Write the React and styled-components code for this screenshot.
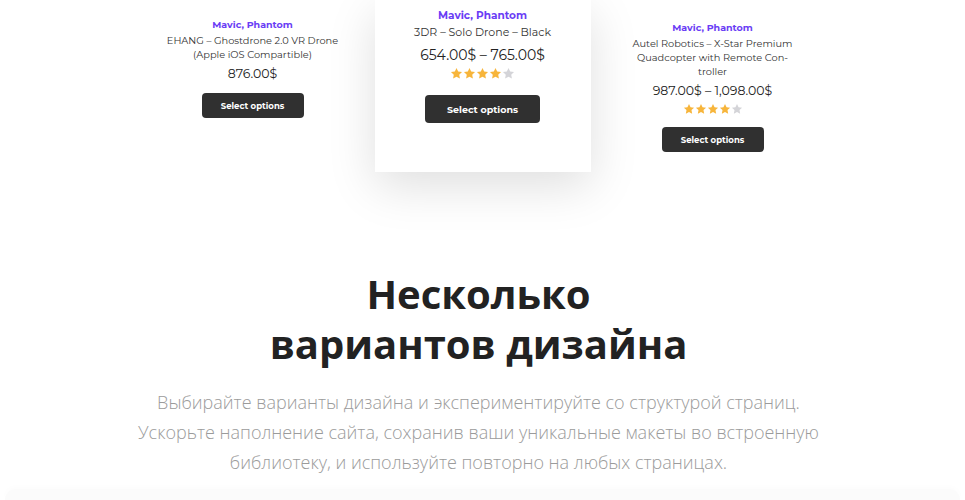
import React from 'react';
import styled, { createGlobalStyle } from 'styled-components';

const GlobalStyle = createGlobalStyle`
  html, body {
    margin: 0;
    padding: 0;
    background: #fff;
  }
  body {
    width: 965px;
    height: 500px;
    overflow: hidden;
  }
`;

const products = [
  {
    title: 'EHANG – Ghostdrone 2.0 VR Drone (Apple iOS Compartible)',
    price: '876.00$',
    rating: 0,
    size: 'sm',
    top: 18,
  },
  {
    title: '3DR – Solo Drone – Black',
    price: '654.00$ – 765.00$',
    rating: 4,
    size: 'lg',
    top: 9,
  },
  {
    title: 'Autel Robotics – X-Star Premium Quadcopter with Remote Con\u00ADtroller',
    price: '987.00$ – 1,098.00$',
    rating: 4,
    size: 'sm',
    top: 21,
  },
];

const Star = ({ filled, size }) => (
  <svg width={size} height={size} viewBox='0 0 24 24'>
    <path
      d='M12 1.8l3.1 6.6 7.1.9-5.2 4.9 1.3 7.1L12 17.8l-6.3 3.5 1.3-7.1-5.2-4.9 7.1-.9z'
      fill={filled ? '#f7b53b' : '#d4d4d8'}
    />
  </svg>
);

const ProductCard = ({ product }) => {
  const lg = product.size === 'lg';
  return (
    <Card $size={product.size} $top={product.top}>
      <Category $size={product.size}>Mavic, Phantom</Category>
      <Title $size={product.size}>{product.title}</Title>
      <Price $size={product.size}>{product.price}</Price>
      {product.rating > 0 && (
        <Stars $size={product.size}>
          {[0, 1, 2, 3, 4].map((i) => (
            <Star key={i} filled={i < product.rating} size={lg ? 13 : 12} />
          ))}
        </Stars>
      )}
      <Button $size={product.size}>Select options</Button>
    </Card>
  );
};

const App = () => {
  return (
    <Page>
      <GlobalStyle />
      <Carousel>
        {products.map((p) => (
          <ProductCard key={p.title} product={p} />
        ))}
      </Carousel>

      <Intro>
        <Heading>
          Несколько
          <br />
          вариантов дизайна
        </Heading>
        <Lead>
          Выбирайте варианты дизайна и экспериментируйте со структурой страниц.
          Ускорьте наполнение сайта, сохранив ваши уникальные макеты во
          встроенную библиотеку, и используйте повторно на любых страницах.
        </Lead>
      </Intro>

      <NextBlock />
    </Page>
  );
};

const Page = styled.div`
  width: 965px;
  height: 500px;
  overflow: hidden;
  display: flex;
  flex-direction: column;
`;

const Carousel = styled.div`
  display: flex;
  justify-content: center;
  align-items: flex-start;
  gap: 26px;
`;

const Card = styled.div`
  width: ${(p) => (p.$size === 'lg' ? '216px' : '192px')};
  height: ${(p) => (p.$size === 'lg' ? '172px' : 'auto')};
  box-sizing: border-box;
  padding: ${(p) => p.$top}px ${(p) => (p.$size === 'lg' ? '10px' : '9px')} 0;
  display: flex;
  flex-direction: column;
  align-items: center;
  text-align: center;
  background: #fff;
  font-family: 'Montserrat', 'DejaVu Sans', sans-serif;
  box-shadow: ${(p) =>
    p.$size === 'lg' ? '0 14px 45px rgba(0, 0, 0, 0.13)' : 'none'};
  position: relative;
  z-index: ${(p) => (p.$size === 'lg' ? 1 : 0)};
`;

const Category = styled.div`
  color: #6a3df5;
  font-weight: 700;
  font-size: ${(p) => (p.$size === 'lg' ? '10.5px' : '9.5px')};
  line-height: 14px;
`;

const Title = styled.div`
  color: #333;
  font-size: ${(p) => (p.$size === 'lg' ? '11px' : '9.8px')};
  line-height: ${(p) => (p.$size === 'lg' ? '18px' : '14px')};
  margin-top: ${(p) => (p.$size === 'lg' ? '0' : '2px')};
  hyphens: manual;
`;

const Price = styled.div`
  color: #222;
  font-size: ${(p) => (p.$size === 'lg' ? '14px' : '12.5px')};
  line-height: 20px;
  margin-top: ${(p) => (p.$size === 'lg' ? '4px' : '2px')};
`;

const Stars = styled.div`
  display: flex;
  margin: ${(p) => (p.$size === 'lg' ? '2px 0 0' : '2px 0 3px')};
`;

const Button = styled.div`
  margin-top: ${(p) => (p.$size === 'lg' ? '15px' : '9px')};
  width: ${(p) => (p.$size === 'lg' ? '115px' : '102px')};
  height: ${(p) => (p.$size === 'lg' ? '28px' : '25px')};
  border-radius: 4px;
  background: #303030;
  color: #fff;
  font-weight: 700;
  font-size: ${(p) => (p.$size === 'lg' ? '9.5px' : '8.5px')};
  display: flex;
  align-items: center;
  justify-content: center;
`;

const Intro = styled.section`
  display: flex;
  flex-direction: column;
  align-items: center;
  text-align: center;
  padding: 97px 8px 0 0;
  font-family: 'Open Sans', 'Liberation Sans', sans-serif;
`;

const Heading = styled.h2`
  margin: 0;
  color: #222;
  font-weight: 700;
  font-size: 40px;
  line-height: 50px;
`;

const Lead = styled.p`
  margin: 18px 0 0;
  max-width: 700px;
  color: #9b9b9b;
  font-weight: 300;
  font-size: 18px;
  line-height: 30px;
`;

const NextBlock = styled.div`
  margin: 12px 5px 0;
  flex: 1;
  border-radius: 14px 14px 0 0;
  background: #fbfbfb;
  box-shadow: 0 -2px 6px rgba(0, 0, 0, 0.015);
`;

export default App;
